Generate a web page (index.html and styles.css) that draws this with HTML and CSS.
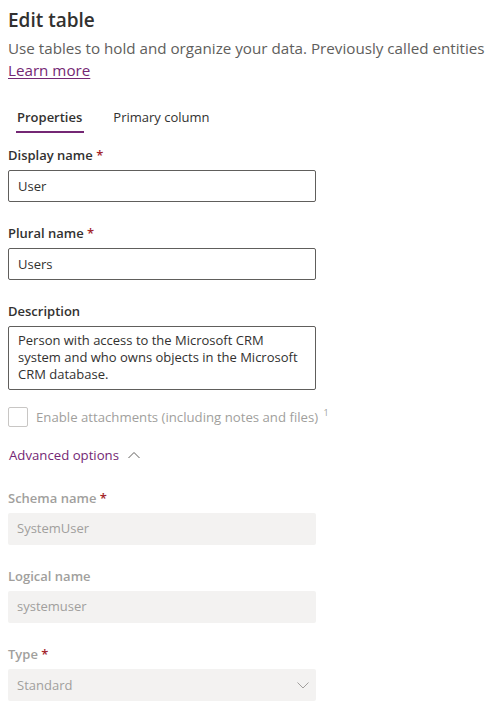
FILE: index.html
```html
<!DOCTYPE html>
<html>
<head>
<meta charset="utf-8">
<link rel="stylesheet" href="styles.css">
</head>
<body>
<div class="panel">
  <h1 class="title">Edit table</h1>
  <p class="subtitle">Use tables to hold and organize your data. Previously called entities</p>
  <a class="link" href="#">Learn more</a>

  <div class="tabs">
    <div class="tab active">Properties</div>
    <div class="tab">Primary column</div>
  </div>

  <div class="field">
    <div class="label">Display name <span class="req">*</span></div>
    <div class="input">User</div>
  </div>
  <div class="field">
    <div class="label">Plural name <span class="req">*</span></div>
    <div class="input">Users</div>
  </div>
  <div class="field">
    <div class="label">Description</div>
    <div class="textarea">Person with access to the Microsoft CRM system and who owns objects in the Microsoft CRM database.</div>
  </div>

  <div class="check-row">
    <span class="checkbox"></span>
    <span class="check-label">Enable attachments (including notes and files) <sup>1</sup></span>
  </div>

  <div class="advanced">
    <span>Advanced options</span>
    <svg width="12" height="8" viewBox="0 0 12 8"><path d="M0.5 7 L6 1.5 L11.5 7" fill="none" stroke="#605e5c" stroke-width="1"/></svg>
  </div>

  <div class="field disabled">
    <div class="label">Schema name <span class="req">*</span></div>
    <div class="input">SystemUser</div>
  </div>
  <div class="field disabled">
    <div class="label">Logical name</div>
    <div class="input">systemuser</div>
  </div>
  <div class="field disabled">
    <div class="label">Type <span class="req">*</span></div>
    <div class="input select"><span>Standard</span>
      <svg width="12" height="7" viewBox="0 0 12 7"><path d="M0.5 0.5 L6 6 L11.5 0.5" fill="none" stroke="#a19f9d" stroke-width="1"/></svg>
    </div>
  </div>
</div>
</body>
</html>
```
FILE: styles.css
```css
* { box-sizing: border-box; }
html, body { margin: 0; padding: 0; background: #fff; }
body {
  font-family: "Open Sans", "Noto Sans", "Liberation Sans", sans-serif;
  color: #323130;
}
.panel { padding: 6px 8px 0 8px; width: 493px; }
.title {
  margin: 0;
  font-size: 19px;
  font-weight: 600;
  line-height: 28px;
  color: #323130;
}
.subtitle {
  margin: 3px 0 0 0;
  font-size: 15.2px;
  line-height: 22px;
  color: #605e5c;
  white-space: nowrap;
}
.link {
  display: inline-block;
  margin-top: -1px;
  font-size: 15.2px;
  line-height: 22px;
  color: #742774;
  text-decoration: underline;
  text-underline-offset: 2px;
}
.tabs {
  display: flex;
  margin-top: 25px;
  height: 26px;
}
.tab {
  font-size: 13px;
  line-height: 22px;
  padding: 0 9px;
  margin-right: 13px;
  color: #323130;
  position: relative;
}
.tab.active { font-weight: 600; }
.tab.active::after {
  content: "";
  position: absolute;
  left: 8px; right: 7px; bottom: -1px;
  height: 2px;
  background: #742774;
}
.field { margin-top: 21px; }
.tabs + .field { margin-top: 13px; }
.label {
  font-size: 13px;
  font-weight: 600;
  line-height: 20px;
  padding-bottom: 5px;
}
.req { color: #a4262c; }
.input {
  width: 308px;
  height: 32px;
  border: 1px solid #605e5c;
  border-radius: 2px;
  padding: 0 9px;
  font-size: 13px;
  line-height: 30px;
}
.textarea {
  width: 308px;
  height: 64px;
  border: 1px solid #605e5c;
  border-radius: 2px;
  padding: 5px 9px;
  font-size: 13px;
  line-height: 17px;
}
.check-row {
  display: flex;
  align-items: center;
  margin-top: 16px;
  height: 22px;
}
.checkbox {
  width: 20px; height: 20px;
  border: 1px solid #c8c6c4;
  border-radius: 2px;
  margin-right: 8px;
}
.check-label { font-size: 13.2px; color: #a19f9d; }
.check-label sup { font-size: 9px; vertical-align: 6px; line-height: 0; margin-left: 2px; }
.advanced {
  display: flex;
  align-items: center;
  gap: 9px;
  margin-top: 15px;
  height: 24px;
  padding-left: 1px;
  font-size: 13.2px;
  color: #742774;
}
.advanced + .field { margin-top: 21px; }
.disabled .label { color: #a19f9d; }
.disabled .input {
  border: none;
  background: #f3f2f1;
  color: #a19f9d;
}
.select {
  display: flex;
  align-items: center;
  justify-content: space-between;
  padding-right: 7px;
}
```
